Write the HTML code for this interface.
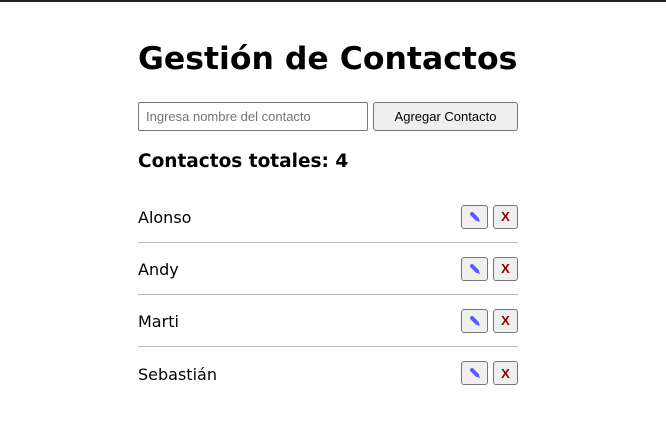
<!DOCTYPE html>
<html><head><meta charset="utf-8"><style>
body{margin:0;background:#fff;font-family:"DejaVu Sans",sans-serif;border-top:2px solid #222;width:666px;height:438px;overflow:hidden}
.c{position:absolute;left:138px;width:380px;top:0}
h1{position:absolute;top:41px;margin:0;font-size:31.5px;font-weight:bold;white-space:nowrap;left:0}
input{position:absolute;top:102px;left:0;width:230px;height:29px;box-sizing:border-box;border:1px solid #767676;border-radius:2px;padding:0 7px;font:13px "Liberation Sans",sans-serif}
input::placeholder{color:#757575}
.add{position:absolute;top:102px;left:235px;width:145px;height:29px;box-sizing:border-box;border:1px solid #767676;border-radius:3px;background:#efefef;font:13px "Liberation Sans",sans-serif;color:#000}
h2{position:absolute;top:151px;margin:0;font-size:18.5px;font-weight:bold;left:0}
.row{position:absolute;left:0;width:380px;height:52px;display:flex;align-items:center;justify-content:space-between;font-size:16px}
.row.b{border-bottom:1px solid #bbb;box-sizing:border-box}
.row>span{position:relative;top:1px}
.btns{display:flex;gap:5px}
.btns span{display:inline-flex;align-items:center;justify-content:center;height:24px;box-sizing:border-box;border:1px solid #767676;border-radius:3px;background:#efefef}
.e{width:27px}
.x{width:25px;color:#8b0000;font:bold 13px "Liberation Sans",sans-serif}
</style></head><body>
<div class="c">
<h1>Gestión de Contactos</h1>
<input placeholder="Ingresa nombre del contacto">
<button class="add">Agregar Contacto</button>
<h2>Contactos totales: 4</h2>
<div class="row b" style="top:191px"><span>Alonso</span><div class="btns"><span class="e"><svg width="12" height="12" viewBox="0 0 12 12"><path d="M3 3 L8 8" stroke="#5a5aff" stroke-width="4" stroke-linecap="round"/><path d="M8.5 8.5 L10.5 10.5" stroke="#5a5aff" stroke-width="1.5"/></svg></span><span class="x">X</span></div></div>
<div class="row b" style="top:243px"><span>Andy</span><div class="btns"><span class="e"><svg width="12" height="12" viewBox="0 0 12 12"><path d="M3 3 L8 8" stroke="#5a5aff" stroke-width="4" stroke-linecap="round"/><path d="M8.5 8.5 L10.5 10.5" stroke="#5a5aff" stroke-width="1.5"/></svg></span><span class="x">X</span></div></div>
<div class="row b" style="top:295px"><span>Marti</span><div class="btns"><span class="e"><svg width="12" height="12" viewBox="0 0 12 12"><path d="M3 3 L8 8" stroke="#5a5aff" stroke-width="4" stroke-linecap="round"/><path d="M8.5 8.5 L10.5 10.5" stroke="#5a5aff" stroke-width="1.5"/></svg></span><span class="x">X</span></div></div>
<div class="row" style="top:347px"><span>Sebastián</span><div class="btns"><span class="e"><svg width="12" height="12" viewBox="0 0 12 12"><path d="M3 3 L8 8" stroke="#5a5aff" stroke-width="4" stroke-linecap="round"/><path d="M8.5 8.5 L10.5 10.5" stroke="#5a5aff" stroke-width="1.5"/></svg></span><span class="x">X</span></div></div>
</div>
</body></html>
